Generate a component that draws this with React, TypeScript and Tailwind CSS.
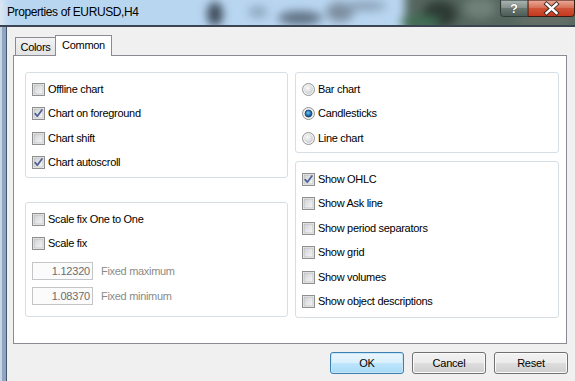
import React from "react";

const font = { fontFamily: '"Liberation Sans", Arial, sans-serif' };

function Defs() {
  return (
    <svg width="0" height="0" className="absolute">
      <defs>
        <linearGradient id="cbFill" x1="0" y1="0" x2="1" y2="1">
          <stop offset="0" stopColor="#cfd1d4" />
          <stop offset="1" stopColor="#f7f7f7" />
        </linearGradient>
        <radialGradient id="rdFill" cx="0.4" cy="0.35" r="0.7">
          <stop offset="0" stopColor="#fbfbfb" />
          <stop offset="1" stopColor="#c9cbce" />
        </radialGradient>
        <radialGradient id="rdDot" cx="0.45" cy="0.4" r="0.65">
          <stop offset="0" stopColor="#7cc8f5" />
          <stop offset="0.6" stopColor="#1a6fb4" />
          <stop offset="1" stopColor="#0b3d6b" />
        </radialGradient>
        <linearGradient id="closeFill" x1="0" y1="0" x2="0" y2="1">
          <stop offset="0" stopColor="#e6a08a" />
          <stop offset="0.45" stopColor="#d1583a" />
          <stop offset="1" stopColor="#c4361d" />
        </linearGradient>
        <linearGradient id="helpFill" x1="0" y1="0" x2="0" y2="1">
          <stop offset="0" stopColor="#9aa6a2" />
          <stop offset="0.45" stopColor="#6c7a75" />
          <stop offset="1" stopColor="#4b5b55" />
        </linearGradient>
        <filter id="blur8" x="-50%" y="-50%" width="200%" height="200%">
          <feGaussianBlur stdDeviation="5" />
        </filter>
      </defs>
    </svg>
  );
}

function CheckBox({ checked }: { checked?: boolean }) {
  return (
    <svg width="13" height="13" viewBox="0 0 13 13" className="shrink-0">
      <rect x="0.5" y="0.5" width="12" height="12" fill="#f4f4f4" stroke="#8e8f8f" />
      <rect x="2" y="2" width="9" height="9" fill="url(#cbFill)" stroke="#aeb0b3" strokeWidth="0.6" />
      {checked && (
        <path
          d="M3.2 6.6 L5.3 9.2 L9.9 2.9"
          fill="none"
          stroke="#4a5f97"
          strokeWidth="1.7"
          strokeLinecap="round"
          strokeLinejoin="round"
        />
      )}
    </svg>
  );
}

function Radio({ checked }: { checked?: boolean }) {
  return (
    <svg width="13" height="13" viewBox="0 0 13 13" className="shrink-0">
      <circle cx="6.5" cy="6.5" r="6" fill="#f2f2f2" stroke="#929394" />
      <circle cx="6.5" cy="6.5" r="4.4" fill="url(#rdFill)" />
      {checked && <circle cx="6.5" cy="6.5" r="3.4" fill="url(#rdDot)" stroke="#1d3e5c" strokeWidth="0.8" />}
    </svg>
  );
}

function CheckRow({ label, checked }: { label: string; checked?: boolean }) {
  return (
    <div className="flex items-center h-[24.5px] pl-[6px] gap-[3px]">
      <CheckBox checked={checked} />
      <span className="text-[11px] tracking-[-0.3px] text-black leading-none">{label}</span>
    </div>
  );
}

function RadioRow({ label, checked }: { label: string; checked?: boolean }) {
  return (
    <div className="flex items-center h-[24.5px] pl-[6px] gap-[3px]">
      <Radio checked={checked} />
      <span className="text-[11px] tracking-[-0.3px] text-black leading-none">{label}</span>
    </div>
  );
}

function ValueRow({ value, label }: { value: string; label: string }) {
  return (
    <div className="flex items-center pl-[6px] gap-[8px]">
      <div className="w-[61px] h-[18px] border border-[#c3c5c8] bg-[#fbfbfb] flex items-center justify-end pr-[2px]">
        <span className="text-[11px] tracking-[-0.2px] text-[#6d6d6d] leading-none">{value}</span>
      </div>
      <span className="text-[11px] tracking-[-0.3px] text-[#8a8a8a] leading-none">{label}</span>
    </div>
  );
}

function Group({ className, children }: { className: string; children: React.ReactNode }) {
  return (
    <div className={"border border-[#d5dfe5] rounded-[3px] flex flex-col " + className}>{children}</div>
  );
}

function TitleBar() {
  return (
    <div className="relative h-[27px] shrink-0 border-b-2 border-[#3b4552] overflow-hidden">
      <svg width="575" height="25" className="absolute left-0 top-0">
        <rect width="575" height="25" fill="#b9d6f1" />
        <g filter="url(#blur8)">
          <rect x="-10" y="-5" width="14" height="40" fill="#e4ecf4" />
          <ellipse cx="215" cy="14" rx="8" ry="12" fill="#3d4c5a" />
          <ellipse cx="258" cy="12" rx="10" ry="6" fill="#8ea7bf" />
          <ellipse cx="300" cy="18" rx="22" ry="7" fill="#5e7082" />
          <ellipse cx="340" cy="12" rx="14" ry="10" fill="#7d8fa0" />
          <ellipse cx="365" cy="6" rx="22" ry="5" fill="#8aa1b6" />
          <rect x="405" y="-10" width="190" height="45" fill="#55665e" />
          <ellipse cx="440" cy="14" rx="18" ry="14" fill="#2e3b36" />
          <ellipse cx="480" cy="8" rx="16" ry="10" fill="#6f8279" />
          <ellipse cx="420" cy="22" rx="20" ry="6" fill="#3d6e52" />
          <ellipse cx="545" cy="20" rx="30" ry="8" fill="#647068" />
        </g>
      </svg>
      <div
        className="absolute left-[7px] top-[6px] text-[12px] tracking-[-0.4px] text-black leading-none"
        style={font}
      >
        Properties of EURUSD,H4
      </div>
      <div className="absolute left-[500px] top-0 flex">
        <svg width="28" height="17" viewBox="0 0 28 17">
          <path d="M0.5 0 V13.5 Q0.5 16.5 3.5 16.5 H28 V0 Z" fill="url(#helpFill)" stroke="#2f3b38" />
          <path d="M1.5 1 H27 V8 H1.5 Z" fill="#ffffff" opacity="0.18" />
          <text
            x="14"
            y="13"
            textAnchor="middle"
            fontFamily="Liberation Sans, Arial, sans-serif"
            fontWeight="700"
            fontSize="13"
            fill="#ffffff"
            stroke="#2a3330"
            strokeWidth="0.6"
            paintOrder="stroke"
          >
            ?
          </text>
        </svg>
        <svg width="47" height="17" viewBox="0 0 47 17">
          <path d="M0 0 V16.5 H43.5 Q46.5 16.5 46.5 13.5 V0 Z" fill="url(#closeFill)" stroke="#3b1a12" />
          <path d="M1 1 H46 V8 H1 Z" fill="#ffffff" opacity="0.16" />
          <path
            d="M18.5 4 L28.5 13 M28.5 4 L18.5 13"
            stroke="#3a2520"
            strokeWidth="4.2"
            strokeLinecap="square"
          />
          <path
            d="M18.5 4 L28.5 13 M28.5 4 L18.5 13"
            stroke="#ffffff"
            strokeWidth="2.4"
            strokeLinecap="square"
          />
        </svg>
      </div>
    </div>
  );
}

function Btn({ label, primary }: { label: string; primary?: boolean }) {
  return (
    <div
      className={
        "w-[74px] h-[22px] rounded-[3px] border flex items-center justify-center text-[11px] tracking-[-0.2px] text-black " +
        (primary
          ? "border-[#3c7fb1] bg-[linear-gradient(#eaf6fd_0%,#d9f0fc_50%,#bee6fd_51%,#a7d9f5_100%)] shadow-[inset_0_0_0_1px_#c7e6f7]"
          : "border-[#707070] bg-[linear-gradient(#f2f2f2_0%,#ebebeb_50%,#dddddd_51%,#cfcfcf_100%)] shadow-[inset_0_0_0_1px_#fbfbfb]")
      }
    >
      {label}
    </div>
  );
}

export default function App() {
  return (
    <div className="w-[575px] h-[381px] overflow-hidden bg-[#f0f0f0] flex flex-col relative" style={font}>
      <Defs />
      <TitleBar />
      <div className="flex flex-1">
        {/* window frame */}
        <div className="w-[7px] shrink-0 flex">
          <div className="w-[2px] bg-[#c9d5e2]" />
          <div className="w-[4px] bg-[#8ea6c3]" />
          <div className="w-[1px] bg-[#46566a]" />
        </div>

        <div className="flex-1 flex flex-col pl-[6px] pt-[8px] pr-[8px]">
          {/* Tabs */}
          <div className="flex h-[20px] items-end pl-[2px] relative z-10">
            <div className="w-[40px] h-[18px] border-l border-t border-[#898c95] bg-[linear-gradient(#f2f2f2,#e3e3e3)] flex items-center justify-center text-[11px] tracking-[-0.3px] pt-px">
              Colors
            </div>
            <div className="w-[57px] h-[21px] -mb-px border-l border-t border-r border-[#898c95] bg-white flex items-center justify-center text-[11px] tracking-[-0.3px] pb-[2px]">
              Common
            </div>
          </div>

          {/* Pane */}
          <div className="h-[289px] border border-[#898c95] bg-white flex gap-[7px] pl-[11px] pt-[16px]">
            <div className="w-[263px] flex flex-col gap-[24px]">
              <Group className="h-[106px] pt-[4px]">
                <CheckRow label="Offline chart" />
                <CheckRow label="Chart on foreground" checked />
                <CheckRow label="Chart shift" />
                <CheckRow label="Chart autoscroll" checked />
              </Group>
              <Group className="h-[115px] pt-[4px]">
                <CheckRow label="Scale fix One to One" />
                <CheckRow label="Scale fix" />
                <div className="flex flex-col gap-[7px] mt-[6px]">
                  <ValueRow value="1.12320" label="Fixed maximum" />
                  <ValueRow value="1.08370" label="Fixed minimum" />
                </div>
              </Group>
            </div>
            <div className="w-[264px] flex flex-col gap-[8px]">
              <Group className="h-[81px] pt-[4px]">
                <RadioRow label="Bar chart" />
                <RadioRow label="Candlesticks" checked />
                <RadioRow label="Line chart" />
              </Group>
              <Group className="h-[157px] pt-[5px]">
                <CheckRow label="Show OHLC" checked />
                <CheckRow label="Show Ask line" />
                <CheckRow label="Show period separators" />
                <CheckRow label="Show grid" />
                <CheckRow label="Show volumes" />
                <CheckRow label="Show object descriptions" />
              </Group>
            </div>
          </div>

          {/* Buttons */}
          <div className="flex justify-end gap-[8px] mt-[8px] -mr-px">
            <Btn label="OK" primary />
            <Btn label="Cancel" />
            <Btn label="Reset" />
          </div>
        </div>
      </div>
    </div>
  );
}
